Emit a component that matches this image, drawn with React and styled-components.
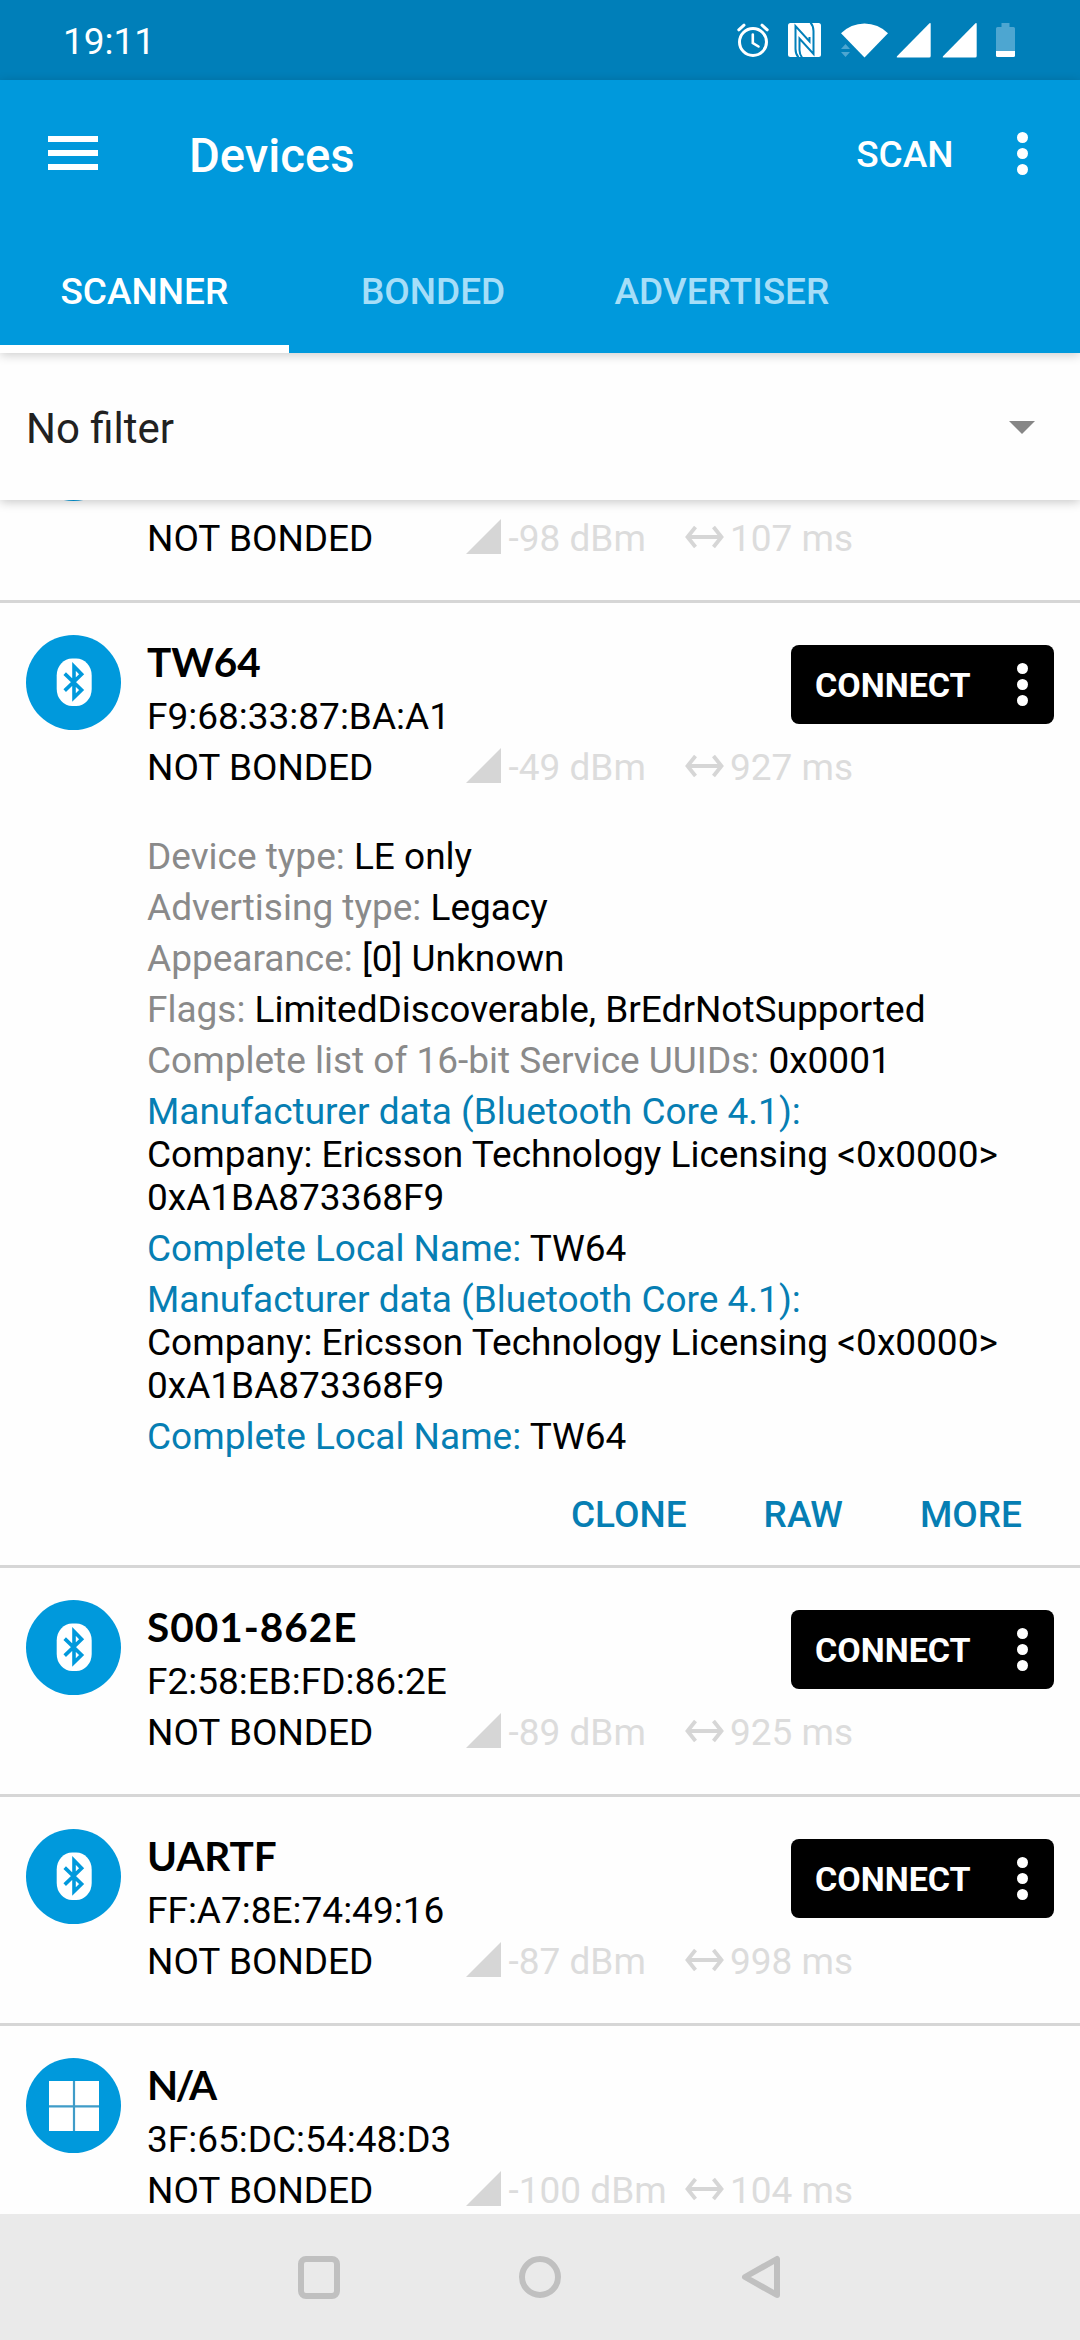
import React from "react";
import styled, { createGlobalStyle } from "styled-components";

const blue = "#0099dc";
const deepBlue = "#007fb9";
const linkBlue = "#067eb3";
const line = "#d6d6d6";

const GlobalStyle = createGlobalStyle`
  *, *::before, *::after { box-sizing: border-box; }
  body { margin: 0; background: #fefefe; }
`;

const Screen = styled.div`
  width: 1080px;
  height: 2340px;
  display: flex;
  flex-direction: column;
  overflow: hidden;
  background: #fefefe;
  color: #000;
  font-family: Roboto, "Noto Sans", sans-serif;
  font-size: 37px;
  line-height: 43px;
`;

const StatusBar = styled.div`
  flex: none;
  height: 80px;
  padding: 0 65px 0 63px;
  display: flex;
  align-items: center;
  justify-content: space-between;
  background: ${deepBlue};
  color: #fff;
`;

const Clock = styled.span`
  padding-top: 2px;
`;

const StatusIcons = styled.div`
  display: flex;
  align-items: center;
  svg { display: block; flex: none; }
`;

const Gap = styled.span`
  width: ${(p) => p.$w}px;
`;

const Header = styled.header`
  flex: none;
  height: 273px;
  display: flex;
  flex-direction: column;
  background: ${blue};
  color: #fff;
  position: relative;
  z-index: 3;
  box-shadow: 0 2px 10px rgba(0, 0, 0, 0.2);
`;

const Toolbar = styled.div`
  height: 147px;
  display: flex;
  align-items: center;
  padding-left: 48px;
`;

const MenuButton = styled.div`
  width: 50px;
  margin: 0 91px 1px 0;
  display: grid;
  gap: 8px;
  span { height: 6px; background: #fff; }
`;

const Title = styled.h1`
  flex: 1;
  margin: 4px 0 0;
  font-size: 47.25px;
  line-height: 56px;
  font-weight: 500;
`;

const ScanAction = styled.span`
  padding-top: 1px;
  font-weight: 500;
`;

const DotsBox = styled.span`
  display: grid;
  gap: 5px;
  width: 11px;
  i { width: 11px; height: 11px; border-radius: 50%; background: #fff; }
`;

const Tabs = styled.nav`
  height: 126px;
  display: flex;
`;

const Tab = styled.div`
  width: 288.75px;
  display: flex;
  align-items: center;
  justify-content: center;
  font-weight: 500;
  color: ${(p) => (p.$active ? "#fff" : "#a6def8")};
  border-top: 10px solid transparent;
  border-bottom: 8px solid ${(p) => (p.$active ? "#fff" : "transparent")};
`;

const Filter = styled.div`
  flex: none;
  height: 147px;
  padding: 5px 45px 0 26px;
  display: flex;
  align-items: center;
  justify-content: space-between;
  background: #fefefe;
  color: #212121;
  font-size: 42px;
  line-height: 50px;
  position: relative;
  z-index: 2;
  box-shadow: 0 2px 10px rgba(0, 0, 0, 0.22);
  svg { margin-bottom: 3px; }
`;

const List = styled.main`
  flex: 1;
  min-height: 0;
  overflow: hidden;
`;

const Item = styled.section`
  border-bottom: 3px solid ${line};
  margin-top: ${(p) => (p.$scrolled ? "-126px" : "0")};
`;

const Summary = styled.div`
  height: 226px;
  padding: 32px 26px 0;
  display: flex;
  align-items: flex-start;
`;

const Avatar = styled.div`
  width: 95px;
  height: 95px;
  border-radius: 50%;
  background: ${blue};
  svg { display: block; }
`;

const Info = styled.div`
  flex: 1;
  margin-left: 26px;
  display: flex;
  flex-direction: column;
`;

const Name = styled.div`
  height: 50px;
  margin-top: 2px;
  font-family: Lato, "Open Sans", sans-serif;
  font-weight: 700;
  font-size: 40.5px;
  line-height: 50px;
  letter-spacing: ${(p) => p.$track || 0}px;
`;

const Address = styled.div`
  margin-top: 8px;
  white-space: nowrap;
`;

const Stats = styled.div`
  margin-top: 8px;
  display: grid;
  grid-template-columns: 319px 219px auto;
  justify-content: start;
  white-space: nowrap;
`;

const Stat = styled.span`
  display: flex;
  align-items: center;
  gap: ${(p) => p.$gap}px;
  color: #dcdcdc;
  svg { display: block; flex: none; margin-bottom: 4px; }
`;

const Connect = styled.div`
  width: 263px;
  height: 79px;
  margin: 10px 0 0 -263px;
  padding: 0 26px 0 24px;
  display: flex;
  align-items: center;
  justify-content: space-between;
  border-radius: 8px;
  background: #000;
  color: #fff;
  font-size: 34px;
  font-weight: 700;
`;

const ConnectLabel = styled.span`
  padding-top: 1px;
`;

const Details = styled.div`
  padding: 6px 26px 0 147px;
  display: grid;
  gap: 8px;
  white-space: nowrap;
`;

const Label = styled.span`
  color: ${(p) => (p.$link ? linkBlue : "#8a8a8a")};
`;

const Actions = styled.div`
  height: 107px;
  padding: 35px 58px 0 0;
  display: flex;
  justify-content: flex-end;
  gap: 77px;
  color: ${linkBlue};
  font-weight: 500;
`;

const NavBar = styled.footer`
  flex: none;
  height: 126px;
  display: flex;
  align-items: center;
  justify-content: center;
  gap: 177px;
  background: #eaeaea;
  svg { display: block; }
`;

const Dots = () => (
  <DotsBox>
    <i />
    <i />
    <i />
  </DotsBox>
);

const BluetoothMark = () => (
  <svg width="95" height="95" viewBox="0 0 95 95">
    <rect x="30.7" y="23.5" width="35" height="47.5" rx="15.500" ry="17" fill="#fff" />
    <path
      d="M38.700 38.600L55.600 55L48 62.500V31.500L55.600 39.200L38.700 55.600"
      fill="none"
      stroke={blue}
      strokeWidth="3.6"
    />
  </svg>
);

const WindowsMark = () => (
  <svg width="95" height="95" viewBox="0 0 95 95">
    <rect x="23" y="23" width="50" height="50" fill="#fff" />
    <path d="M48 23V73M23 48.3H73" stroke="#3f9cc8" strokeWidth="2.2" />
  </svg>
);

const SignalIcon = () => (
  <svg width="35" height="35" viewBox="0 0 35 35">
    <path d="M35 0V35H0Z" fill={line} />
  </svg>
);

const IntervalIcon = () => (
  <svg width="39" height="24" viewBox="0 0 39 24">
    <path
      d="M2.500 12H36.500M10.500 2L2.500 12L10.500 22M28.500 2L36.500 12L28.500 22"
      fill="none"
      stroke={line}
      strokeWidth="3.8"
    />
  </svg>
);

const CellIcon = () => (
  <svg width="35" height="36" viewBox="0 0 35 36">
    <path d="M33.5 1.2Q34.7 0.6 34.7 2V34Q34.7 35.5 33.2 35.5H1.5Q0 35.5 1 34.3Z" fill="#fff" />
  </svg>
);

const devices = [
  { mac: "44:9C:35:36:83:20", dbm: "-98 dBm", ms: "107 ms", scrolled: true },
  {
    name: "TW64",
    track: 0,
    mac: "F9:68:33:87:BA:A1",
    dbm: "-49 dBm",
    ms: "927 ms",
    connect: true,
    details: true,
  },
  { name: "S001-862E", track: 1, mac: "F2:58:EB:FD:86:2E", dbm: "-89 dBm", ms: "925 ms", connect: true },
  { name: "UARTF", track: -0.1, mac: "FF:A7:8E:74:49:16", dbm: "-87 dBm", ms: "998 ms", connect: true },
  { name: "N/A", track: -2.8, mac: "3F:65:DC:54:48:D3", dbm: "-100 dBm", ms: "104 ms", windows: true },
];

const manufacturer = {
  label: "Manufacturer data (Bluetooth Core 4.1):",
  link: true,
  lines: ["Company: Ericsson Technology Licensing <0x0000>", "0xA1BA873368F9"],
};
const localName = { label: "Complete Local Name:", link: true, value: "TW64" };

const fields = [
  { label: "Device type:", value: "LE only" },
  { label: "Advertising type:", value: "Legacy" },
  { label: "Appearance:", value: "[0] Unknown" },
  { label: "Flags:", value: "LimitedDiscoverable, BrEdrNotSupported" },
  { label: "Complete list of 16-bit Service UUIDs:", value: "0x0001" },
  manufacturer,
  localName,
  manufacturer,
  localName,
];

const Device = ({ d }) => (
  <Item $scrolled={d.scrolled}>
    <Summary>
      <Avatar>{d.windows ? <WindowsMark /> : <BluetoothMark />}</Avatar>
      <Info>
        <Name $track={d.track}>{d.name}</Name>
        <Address>{d.mac}</Address>
        <Stats>
          <span>NOT BONDED</span>
          <Stat $gap={7.5}>
            <SignalIcon />
            {d.dbm}
          </Stat>
          <Stat $gap={6}>
            <IntervalIcon />
            {d.ms}
          </Stat>
        </Stats>
      </Info>
      {d.connect && (
        <Connect>
          <ConnectLabel>CONNECT</ConnectLabel>
          <Dots />
        </Connect>
      )}
    </Summary>
    {d.details && (
      <>
        <Details>
          {fields.map((f, i) => (
            <div key={i}>
              <Label $link={f.link}>{f.label}</Label>
              {f.value && " " + f.value}
              {f.lines && f.lines.map((l) => <div key={l}>{l}</div>)}
            </div>
          ))}
        </Details>
        <Actions>
          <span>CLONE</span>
          <span>RAW</span>
          <span>MORE</span>
        </Actions>
      </>
    )}
  </Item>
);

export default function App() {
  return (
    <Screen>
      <GlobalStyle />
      <StatusBar>
        <Clock>19:11</Clock>
        <StatusIcons>
          <svg width="32" height="36" viewBox="0 0 32 36" fill="none" stroke="#fff" strokeLinecap="round">
            <circle cx="16" cy="20" r="13.5" strokeWidth="3" />
            <path d="M15.8 12.5V21L21.5 24.5" strokeWidth="2.6" />
            <path d="M1.8 7.8L7 3.2M30.2 7.8L25 3.2" strokeWidth="3" />
          </svg>
          <Gap $w={19} />
          <svg width="33" height="36" viewBox="0 0 33 36">
            <rect y="1" width="33" height="34" rx="2.5" fill="#fff" />
            <path
              d="M10.500 35.500Q7.500 32 7.500 27V4L21.500 19.500V15M22.500 0.500Q25.500 4 25.500 9V32L11.500 16.500V28Q11.500 32 14 35.500"
              fill="none"
              stroke={deepBlue}
              strokeWidth="2"
            />
          </svg>
          <Gap $w={20} />
          <svg width="47" height="36" viewBox="0 0 47 36">
            <path d="M23.500 35.500L0 11.300A33 33 0 0 1 47 11.300Z" fill="#fff" />
            <path d="M0 27L4.500 22L9 27ZM0 30H9L4.500 35Z" fill="#4da6d1" />
          </svg>
          <Gap $w={7.5} />
          <CellIcon />
          <Gap $w={11} />
          <CellIcon />
          <Gap $w={19.5} />
          <svg width="19" height="36" viewBox="0 0 19 36">
            <path d="M5.500 1H13.500V5H17.500Q19 5 19 6.500V29H0V6.500Q0 5 1.500 5H5.500Z" fill="#4da6d1" />
            <path d="M0 29H19V33.500Q19 35 17.500 35H1.500Q0 35 0 33.500Z" fill="#fff" />
          </svg>
        </StatusIcons>
      </StatusBar>
      <Header>
        <Toolbar>
          <MenuButton>
            <span />
            <span />
            <span />
          </MenuButton>
          <Title>Devices</Title>
          <ScanAction>SCAN</ScanAction>
          <Gap $w={63.5} />
          <Dots />
          <Gap $w={52} />
        </Toolbar>
        <Tabs>
          <Tab $active>SCANNER</Tab>
          <Tab>BONDED</Tab>
          <Tab>ADVERTISER</Tab>
        </Tabs>
      </Header>
      <Filter>
        No filter
        <svg width="26" height="13" viewBox="0 0 26 13">
          <path d="M0 0H26L13 13Z" fill="#868686" />
        </svg>
      </Filter>
      <List>
        {devices.map((d, i) => (
          <Device key={i} d={d} />
        ))}
      </List>
      <NavBar>
        <svg width="44" height="44" viewBox="0 0 44 44">
          <rect x="4" y="4" width="36" height="37" rx="5" fill="none" stroke="#c0c0c0" strokeWidth="6" />
        </svg>
        <svg width="44" height="44" viewBox="0 0 44 44">
          <circle cx="22" cy="22" r="18" fill="none" stroke="#c0c0c0" strokeWidth="6" />
        </svg>
        <svg width="44" height="44" viewBox="0 0 44 44">
          <path d="M38 4V40L6 22Z" fill="none" stroke="#c0c0c0" strokeWidth="6" strokeLinejoin="round" />
        </svg>
      </NavBar>
    </Screen>
  );
}
